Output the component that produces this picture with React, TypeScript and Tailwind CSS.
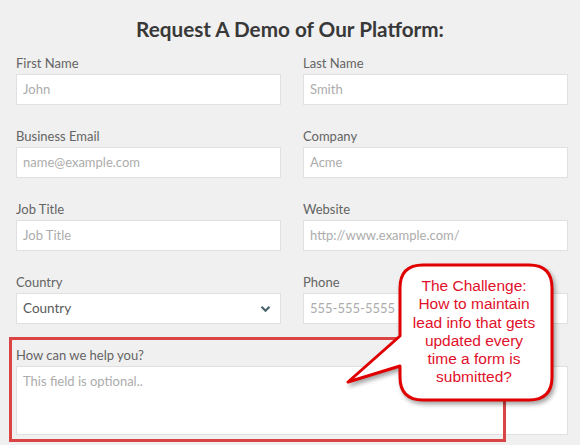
import React from 'react';

const fields = [
  { label: 'First Name', placeholder: 'John' },
  { label: 'Last Name', placeholder: 'Smith' },
  { label: 'Business Email', placeholder: 'name@example.com' },
  { label: 'Company', placeholder: 'Acme' },
  { label: 'Job Title', placeholder: 'Job Title' },
  { label: 'Website', placeholder: 'http://www.example.com/' },
];

function Field({ label, placeholder }: { label: string; placeholder: string }) {
  return (
    <div className="flex flex-col">
      <label className="h-[20px] mb-[1px] text-[13px] leading-[20px] text-[#646464]">{label}</label>
      <div className="h-[31px] bg-white border border-[#e0e0e0] px-[6px] flex items-center text-[13px] text-[#acacac]">
        {placeholder}
      </div>
    </div>
  );
}

export default function App() {
  return (
    <div className="relative w-[580px] h-[445px] overflow-hidden bg-[#f0f0f0] font-['Lato',sans-serif]">
      <div className="pt-[16px] h-[53px] text-center">
        <h1 className="text-[20.7px] leading-[26px] font-bold text-[#383838]">Request A Demo of Our Platform:</h1>
      </div>

      <div className="pl-[16px] pr-[12px]">
        <div className="grid grid-cols-2 gap-x-[22px] gap-y-[21px]">
          {fields.map((f) => (
            <Field key={f.label} label={f.label} placeholder={f.placeholder} />
          ))}
          <div className="flex flex-col">
            <label className="h-[20px] mb-[1px] text-[13px] leading-[20px] text-[#646464]">Country</label>
            <div className="h-[31px] bg-white border border-[#e0e0e0] pl-[6px] pr-[8px] flex items-center justify-between text-[13.5px] text-[#5a5a5a]">
              <span>Country</span>
              <svg width="11" height="8" viewBox="0 0 11 8" className="mr-[1px]">
                <path d="M1.5 1.8 L5.5 5.8 L9.5 1.8" fill="none" stroke="#4b6470" strokeWidth="2.2" />
              </svg>
            </div>
          </div>
          <Field label="Phone" placeholder="555-555-5555" />
        </div>

        <div className="mt-[21px] flex flex-col">
          <label className="h-[20px] mb-[1px] text-[13px] leading-[20px] text-[#646464]">How can we help you?</label>
          <div className="h-[69px] bg-white border border-[#e0e0e0] px-[6px] pt-[5px] text-[13px] text-[#acacac]">
            This field is optional..
          </div>
        </div>
      </div>

      {/* highlight box */}
      <div className="absolute left-[9px] top-[337px] w-[497px] h-[105px] border-[3px] border-[#d94444]" />

      {/* callout */}
      <svg
        className="absolute left-0 top-0 drop-shadow-[2px_3px_2px_rgba(0,0,0,0.35)]"
        width="580"
        height="445"
        viewBox="0 0 580 445"
      >
        <path
          d="M423 265 H529 Q552 265 552 288 V377 Q552 400 529 400 H423 Q400 400 400 377 V366 L348 382 L400 336 V288 Q400 265 423 265 Z"
          fill="#fff"
          stroke="#e00000"
          strokeWidth="3"
          strokeLinejoin="round"
        />
      </svg>
      <div className="absolute left-[398px] top-[277px] w-[152px] text-center font-['Liberation_Sans',Arial,sans-serif] text-[15.5px] leading-[18.3px] text-[#e0102a]">
        The Challenge:
        <br />
        How to maintain
        <br />
        lead info that gets
        <br />
        updated every
        <br />
        time a form is
        <br />
        submitted?
      </div>
    </div>
  );
}
